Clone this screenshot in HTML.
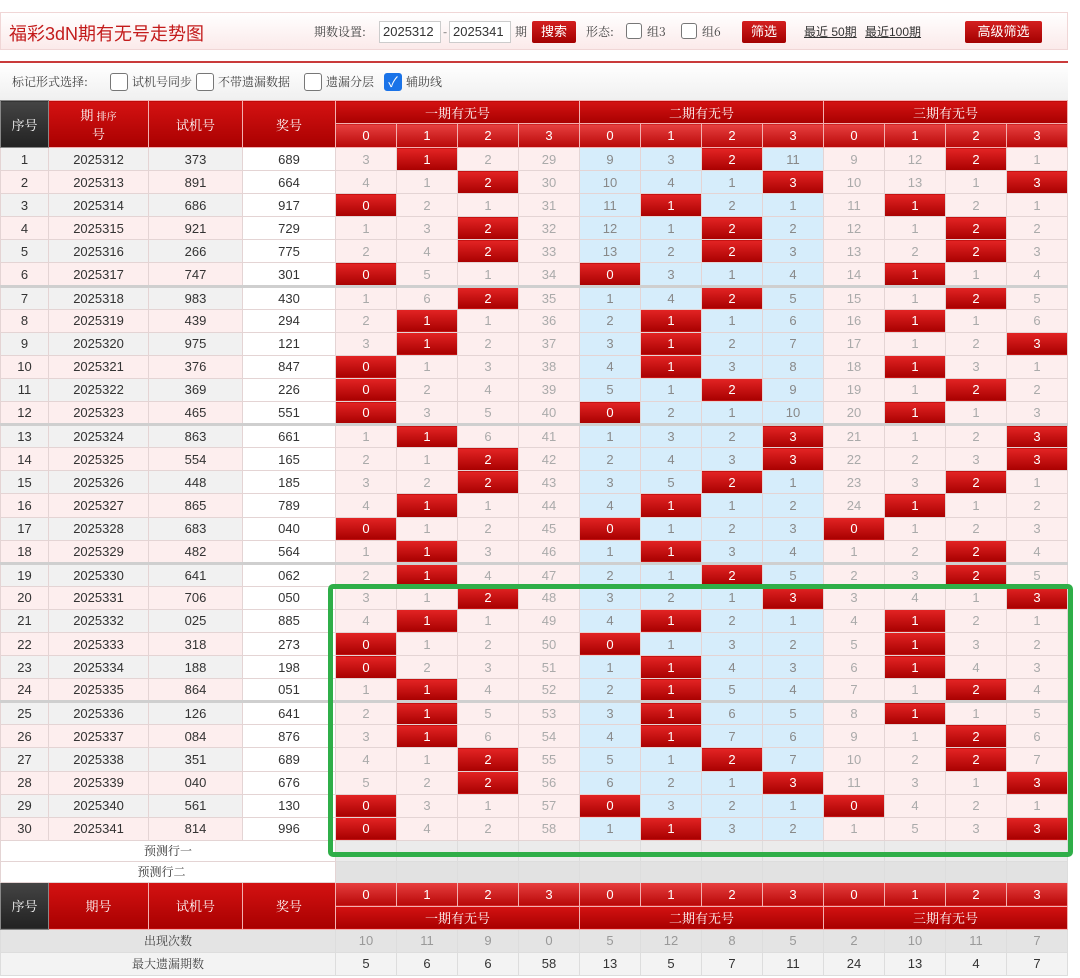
<!DOCTYPE html>
<html><head><meta charset="utf-8">
<style>
*{box-sizing:border-box;margin:0;padding:0}
body{width:1080px;height:978px;overflow:hidden;background:#fff;font-family:"Liberation Sans","Noto Sans CJK SC",sans-serif;position:relative}
.top{position:absolute;left:0;top:12px;width:1068px;height:38px;background:linear-gradient(#fff,#fbeaea);border:1px solid #f0d6d6}
.title{position:absolute;left:8px;top:7px;font-size:18px;color:#c31b1b;font-family:"Liberation Sans","Noto Sans CJK SC",sans-serif}
.t{position:absolute;top:10px;font-size:12px;color:#444;font-family:"Noto Serif CJK SC",serif}
.inp{position:absolute;top:8px;height:22px;border:1px solid #ccc;background:#fff;font-size:13px;line-height:20px;padding-left:3px;color:#333}
.btn{position:absolute;top:8px;height:22px;background:linear-gradient(#d42020,#a30000);color:#fff;font-size:13px;line-height:22px;text-align:center;border-radius:2px}
.cb{position:absolute;width:16px;height:16px;border:1px solid #777;border-radius:3px;background:#fff}
.lk{position:absolute;top:10px;font-size:12px;color:#333;text-decoration:underline}
.redline{position:absolute;left:0;top:61px;width:1068px;height:2px;background:#c93a3a}
.opt{position:absolute;left:0;top:63px;width:1068px;height:37px;background:linear-gradient(#fff,#f0f0f0)}
.opt .cb{top:10px;width:18px;height:18px}
.opt .t{top:10px;font-size:12px}
table{position:absolute;left:0;top:100px;border-collapse:collapse;table-layout:fixed;width:1068px;font-size:13px;text-align:center}
td,th{border:1px solid #e4d4d4;height:23px;padding:0;overflow:hidden;white-space:nowrap}
th{font-weight:normal;color:#fff;background:linear-gradient(#d41212,#a80000);font-family:"Noto Serif CJK SC",serif;border-color:#f3b0b0}
th.n{background:linear-gradient(#e84040,#b80808);font-family:"Liberation Sans",sans-serif;height:24px}
th.k{background:linear-gradient(#444,#222);border-color:#888}
.m tr{height:23.1px}
.m td{color:#aaa}
.m td:nth-child(-n+4){color:#333}
.m tr.o td:nth-child(-n+3){background:#f1f1f1}
.m tr.e td:nth-child(-n+3){background:#fdeeee}
.m td:nth-child(4){background:#fff}
.m td:nth-child(n+5){background:#fdeeee}
.m td:nth-child(n+9):nth-child(-n+12){background:#d6edfb;color:#888}
.m td.r{background:linear-gradient(#e42424,#a80000)!important;color:#fff!important}
.m tr.s td{border-top:3px solid #cfcfcf}
.p td{background:#fff;color:#333;font-family:"Noto Serif CJK SC",serif;font-size:12px;height:21px}
.p td+td{background:#ebebeb;border-color:#ddd}
.p2 td+td{background:#e2e2e2}
.f1 td{background:#e4e4e4;color:#999;border-color:#ddd}
.f2 td{background:#f3f3f3;color:#333;border-color:#ddd}
.f1 td:first-child,.f2 td:first-child{font-family:"Noto Serif CJK SC",serif;font-size:12px;color:#444}
.green{position:absolute;left:328px;top:584px;width:745px;height:273px;border:5px solid #2fae48;border-radius:5px}
</style></head><body>
<div class="top">
<div class="title">福彩3dN期有无号走势图</div>
<div class="t" style="left:313px">期数设置:</div>
<div class="inp" style="left:378px;width:62px">2025312</div>
<div class="t" style="left:442px">-</div>
<div class="inp" style="left:448px;width:62px">2025341</div>
<div class="t" style="left:514px">期</div>
<div class="btn" style="left:531px;width:44px">搜索</div>
<div class="t" style="left:585px">形态:</div>
<div class="cb" style="left:625px;top:10px"></div><div class="t" style="left:646px">组3</div>
<div class="cb" style="left:680px;top:10px"></div><div class="t" style="left:701px">组6</div>
<div class="btn" style="left:741px;width:44px">筛选</div>
<div class="lk" style="left:803px">最近 50期</div>
<div class="lk" style="left:864px">最近100期</div>
<div class="btn" style="left:964px;width:77px">高级筛选</div>
</div>
<div class="redline"></div>
<div class="opt">
<div class="t" style="left:12px">标记形式选择:</div>
<div class="cb" style="left:110px"></div><div class="t" style="left:132px">试机号同步</div>
<div class="cb" style="left:196px"></div><div class="t" style="left:218px">不带遗漏数据</div>
<div class="cb" style="left:304px"></div><div class="t" style="left:326px">遗漏分层</div>
<div class="cb" style="left:384px;background:#1a73e8;border-color:#1a73e8;color:#fff;font-size:14px;line-height:16px;text-align:center">✓</div><div class="t" style="left:406px">辅助线</div>
</div>
<table>
<colgroup><col style="width:48px"><col style="width:100px"><col style="width:94px"><col style="width:93px"><col span="12" style="width:61px"></colgroup>
<thead>
<tr><th class="k" rowspan="2">序号</th><th rowspan="2">期 <span style="font-size:10px">排序</span><br>号</th><th rowspan="2">试机号</th><th rowspan="2">奖号</th><th colspan="4" style="height:22px">一期有无号</th><th colspan="4">二期有无号</th><th colspan="4">三期有无号</th></tr>
<tr><th class="n">0</th><th class="n">1</th><th class="n">2</th><th class="n">3</th><th class="n">0</th><th class="n">1</th><th class="n">2</th><th class="n">3</th><th class="n">0</th><th class="n">1</th><th class="n">2</th><th class="n">3</th></tr>
</thead>
<tbody class="m">
<tr class="o"><td>1</td><td>2025312</td><td>373</td><td>689</td><td>3</td><td class="r">1</td><td>2</td><td>29</td><td>9</td><td>3</td><td class="r">2</td><td>11</td><td>9</td><td>12</td><td class="r">2</td><td>1</td></tr>
<tr class="e"><td>2</td><td>2025313</td><td>891</td><td>664</td><td>4</td><td>1</td><td class="r">2</td><td>30</td><td>10</td><td>4</td><td>1</td><td class="r">3</td><td>10</td><td>13</td><td>1</td><td class="r">3</td></tr>
<tr class="o"><td>3</td><td>2025314</td><td>686</td><td>917</td><td class="r">0</td><td>2</td><td>1</td><td>31</td><td>11</td><td class="r">1</td><td>2</td><td>1</td><td>11</td><td class="r">1</td><td>2</td><td>1</td></tr>
<tr class="e"><td>4</td><td>2025315</td><td>921</td><td>729</td><td>1</td><td>3</td><td class="r">2</td><td>32</td><td>12</td><td>1</td><td class="r">2</td><td>2</td><td>12</td><td>1</td><td class="r">2</td><td>2</td></tr>
<tr class="o"><td>5</td><td>2025316</td><td>266</td><td>775</td><td>2</td><td>4</td><td class="r">2</td><td>33</td><td>13</td><td>2</td><td class="r">2</td><td>3</td><td>13</td><td>2</td><td class="r">2</td><td>3</td></tr>
<tr class="e"><td>6</td><td>2025317</td><td>747</td><td>301</td><td class="r">0</td><td>5</td><td>1</td><td>34</td><td class="r">0</td><td>3</td><td>1</td><td>4</td><td>14</td><td class="r">1</td><td>1</td><td>4</td></tr>
<tr class="o s"><td>7</td><td>2025318</td><td>983</td><td>430</td><td>1</td><td>6</td><td class="r">2</td><td>35</td><td>1</td><td>4</td><td class="r">2</td><td>5</td><td>15</td><td>1</td><td class="r">2</td><td>5</td></tr>
<tr class="e"><td>8</td><td>2025319</td><td>439</td><td>294</td><td>2</td><td class="r">1</td><td>1</td><td>36</td><td>2</td><td class="r">1</td><td>1</td><td>6</td><td>16</td><td class="r">1</td><td>1</td><td>6</td></tr>
<tr class="o"><td>9</td><td>2025320</td><td>975</td><td>121</td><td>3</td><td class="r">1</td><td>2</td><td>37</td><td>3</td><td class="r">1</td><td>2</td><td>7</td><td>17</td><td>1</td><td>2</td><td class="r">3</td></tr>
<tr class="e"><td>10</td><td>2025321</td><td>376</td><td>847</td><td class="r">0</td><td>1</td><td>3</td><td>38</td><td>4</td><td class="r">1</td><td>3</td><td>8</td><td>18</td><td class="r">1</td><td>3</td><td>1</td></tr>
<tr class="o"><td>11</td><td>2025322</td><td>369</td><td>226</td><td class="r">0</td><td>2</td><td>4</td><td>39</td><td>5</td><td>1</td><td class="r">2</td><td>9</td><td>19</td><td>1</td><td class="r">2</td><td>2</td></tr>
<tr class="e"><td>12</td><td>2025323</td><td>465</td><td>551</td><td class="r">0</td><td>3</td><td>5</td><td>40</td><td class="r">0</td><td>2</td><td>1</td><td>10</td><td>20</td><td class="r">1</td><td>1</td><td>3</td></tr>
<tr class="o s"><td>13</td><td>2025324</td><td>863</td><td>661</td><td>1</td><td class="r">1</td><td>6</td><td>41</td><td>1</td><td>3</td><td>2</td><td class="r">3</td><td>21</td><td>1</td><td>2</td><td class="r">3</td></tr>
<tr class="e"><td>14</td><td>2025325</td><td>554</td><td>165</td><td>2</td><td>1</td><td class="r">2</td><td>42</td><td>2</td><td>4</td><td>3</td><td class="r">3</td><td>22</td><td>2</td><td>3</td><td class="r">3</td></tr>
<tr class="o"><td>15</td><td>2025326</td><td>448</td><td>185</td><td>3</td><td>2</td><td class="r">2</td><td>43</td><td>3</td><td>5</td><td class="r">2</td><td>1</td><td>23</td><td>3</td><td class="r">2</td><td>1</td></tr>
<tr class="e"><td>16</td><td>2025327</td><td>865</td><td>789</td><td>4</td><td class="r">1</td><td>1</td><td>44</td><td>4</td><td class="r">1</td><td>1</td><td>2</td><td>24</td><td class="r">1</td><td>1</td><td>2</td></tr>
<tr class="o"><td>17</td><td>2025328</td><td>683</td><td>040</td><td class="r">0</td><td>1</td><td>2</td><td>45</td><td class="r">0</td><td>1</td><td>2</td><td>3</td><td class="r">0</td><td>1</td><td>2</td><td>3</td></tr>
<tr class="e"><td>18</td><td>2025329</td><td>482</td><td>564</td><td>1</td><td class="r">1</td><td>3</td><td>46</td><td>1</td><td class="r">1</td><td>3</td><td>4</td><td>1</td><td>2</td><td class="r">2</td><td>4</td></tr>
<tr class="o s"><td>19</td><td>2025330</td><td>641</td><td>062</td><td>2</td><td class="r">1</td><td>4</td><td>47</td><td>2</td><td>1</td><td class="r">2</td><td>5</td><td>2</td><td>3</td><td class="r">2</td><td>5</td></tr>
<tr class="e"><td>20</td><td>2025331</td><td>706</td><td>050</td><td>3</td><td>1</td><td class="r">2</td><td>48</td><td>3</td><td>2</td><td>1</td><td class="r">3</td><td>3</td><td>4</td><td>1</td><td class="r">3</td></tr>
<tr class="o"><td>21</td><td>2025332</td><td>025</td><td>885</td><td>4</td><td class="r">1</td><td>1</td><td>49</td><td>4</td><td class="r">1</td><td>2</td><td>1</td><td>4</td><td class="r">1</td><td>2</td><td>1</td></tr>
<tr class="e"><td>22</td><td>2025333</td><td>318</td><td>273</td><td class="r">0</td><td>1</td><td>2</td><td>50</td><td class="r">0</td><td>1</td><td>3</td><td>2</td><td>5</td><td class="r">1</td><td>3</td><td>2</td></tr>
<tr class="o"><td>23</td><td>2025334</td><td>188</td><td>198</td><td class="r">0</td><td>2</td><td>3</td><td>51</td><td>1</td><td class="r">1</td><td>4</td><td>3</td><td>6</td><td class="r">1</td><td>4</td><td>3</td></tr>
<tr class="e"><td>24</td><td>2025335</td><td>864</td><td>051</td><td>1</td><td class="r">1</td><td>4</td><td>52</td><td>2</td><td class="r">1</td><td>5</td><td>4</td><td>7</td><td>1</td><td class="r">2</td><td>4</td></tr>
<tr class="o s"><td>25</td><td>2025336</td><td>126</td><td>641</td><td>2</td><td class="r">1</td><td>5</td><td>53</td><td>3</td><td class="r">1</td><td>6</td><td>5</td><td>8</td><td class="r">1</td><td>1</td><td>5</td></tr>
<tr class="e"><td>26</td><td>2025337</td><td>084</td><td>876</td><td>3</td><td class="r">1</td><td>6</td><td>54</td><td>4</td><td class="r">1</td><td>7</td><td>6</td><td>9</td><td>1</td><td class="r">2</td><td>6</td></tr>
<tr class="o"><td>27</td><td>2025338</td><td>351</td><td>689</td><td>4</td><td>1</td><td class="r">2</td><td>55</td><td>5</td><td>1</td><td class="r">2</td><td>7</td><td>10</td><td>2</td><td class="r">2</td><td>7</td></tr>
<tr class="e"><td>28</td><td>2025339</td><td>040</td><td>676</td><td>5</td><td>2</td><td class="r">2</td><td>56</td><td>6</td><td>2</td><td>1</td><td class="r">3</td><td>11</td><td>3</td><td>1</td><td class="r">3</td></tr>
<tr class="o"><td>29</td><td>2025340</td><td>561</td><td>130</td><td class="r">0</td><td>3</td><td>1</td><td>57</td><td class="r">0</td><td>3</td><td>2</td><td>1</td><td class="r">0</td><td>4</td><td>2</td><td>1</td></tr>
<tr class="e"><td>30</td><td>2025341</td><td>814</td><td>996</td><td class="r">0</td><td>4</td><td>2</td><td>58</td><td>1</td><td class="r">1</td><td>3</td><td>2</td><td>1</td><td>5</td><td>3</td><td class="r">3</td></tr>
</tbody>
<tbody>
<tr class="p"><td colspan="4">预测行一</td><td></td><td></td><td></td><td></td><td></td><td></td><td></td><td></td><td></td><td></td><td></td><td></td></tr>
<tr class="p p2"><td colspan="4">预测行二 <span style="color:#d33;font-size:10px;position:relative;left:150px;top:5px">▼</span></td><td></td><td></td><td></td><td></td><td></td><td></td><td></td><td></td><td></td><td></td><td></td><td></td></tr>
</tbody>
<tbody>
<tr><th class="k" rowspan="2">序号</th><th rowspan="2">期号</th><th rowspan="2">试机号</th><th rowspan="2">奖号</th><th class="n" style="height:23px">0</th><th class="n">1</th><th class="n">2</th><th class="n">3</th><th class="n">0</th><th class="n">1</th><th class="n">2</th><th class="n">3</th><th class="n">0</th><th class="n">1</th><th class="n">2</th><th class="n">3</th></tr>
<tr><th colspan="4" style="height:23px">一期有无号</th><th colspan="4">二期有无号</th><th colspan="4">三期有无号</th></tr>
</tbody>
<tbody>
<tr class="f1"><td colspan="4">出现次数</td><td>10</td><td>11</td><td>9</td><td>0</td><td>5</td><td>12</td><td>8</td><td>5</td><td>2</td><td>10</td><td>11</td><td>7</td></tr>
<tr class="f2"><td colspan="4">最大遗漏期数</td><td>5</td><td>6</td><td>6</td><td>58</td><td>13</td><td>5</td><td>7</td><td>11</td><td>24</td><td>13</td><td>4</td><td>7</td></tr>
</tbody>
</table>
<div class="green"></div>
</body></html>
